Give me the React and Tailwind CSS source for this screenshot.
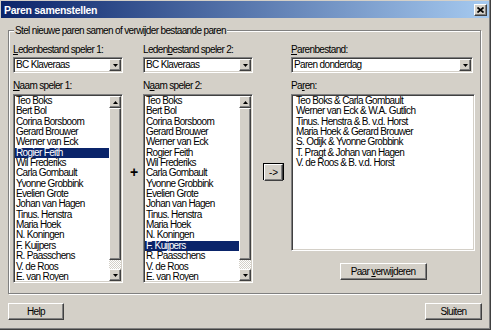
import React from 'react'

const raised =
  'bg-[#d4d0c8] border border-t-white border-l-white border-r-[#404040] border-b-[#404040] shadow-[inset_-1px_-1px_0_#808080]'
const sunken =
  'bg-white border border-t-[#808080] border-l-[#808080] border-r-white border-b-white shadow-[inset_1px_1px_0_#404040,inset_-1px_-1px_0_#d4d0c8] p-[1px]'
const font = "font-['Liberation_Sans',Arial,sans-serif] text-[10px] tracking-[-0.65px] text-black"

const spelers = [
  'Teo Boks',
  'Bert Bol',
  'Corina Borsboom',
  'Gerard Brouwer',
  'Werner van Eck',
  'Rogier Feith',
  'Wil Frederiks',
  'Carla Gombault',
  'Yvonne Grobbink',
  'Evelien Grote',
  'Johan van Hagen',
  'Tinus. Henstra',
  'Maria Hoek',
  'N. Koningen',
  'F. Kuijpers',
  'R. Paasschens',
  'V. de Roos',
  'E. van Royen',
]

const paren = [
  'Teo Boks & Carla Gombault',
  'Werner van Eck & W.A. Gutlich',
  'Tinus. Henstra & B. v.d. Horst',
  'Maria Hoek & Gerard Brouwer',
  'S. Odijk & Yvonne Grobbink',
  'T. Pragt & Johan van Hagen',
  'V. de Roos & B. v.d. Horst',
]

/* label with underlined access key */
function Label({ text, at }) {
  return (
    <div className="h-[11px] leading-[11px] whitespace-nowrap">
      {text.slice(0, at)}
      <span className="underline underline-offset-[1px]">{text[at]}</span>
      {text.slice(at + 1)}
    </div>
  )
}

function Arrow({ up }) {
  return (
    <svg width="5" height="3" viewBox="0 0 5 3">
      <path d={up ? 'M0 3h5L2.5 0z' : 'M0 0h5L2.5 3z'} fill="#000" />
    </svg>
  )
}

function ComboBox({ value, width }) {
  return (
    <div className={`${sunken} flex h-[16px] mt-[2px]`} style={{ width }}>
      <div className="flex-1 pl-[1px] leading-[12px] whitespace-nowrap">{value}</div>
      <div className={`${raised} w-[12px] h-[12px] flex items-center justify-center`}>
        <Arrow />
      </div>
    </div>
  )
}

function ListBox({ items, selected, width, height, scroll, pad = 'pl-[1px]' }) {
  return (
    <div className={`${sunken} flex mt-[3px]`} style={{ width, height }}>
      <div className="flex-1 overflow-hidden">
        {items.map((item, i) => (
          <div
            key={item}
            className={`h-[10.35px] leading-[10.35px] whitespace-nowrap ${pad} ${
              i === selected ? 'bg-[#0a246a] text-white' : ''
            }`}
          >
            {item}
          </div>
        ))}
      </div>
      {scroll && (
        <div className="w-[12px] flex flex-col">
          <div className={`${raised} h-[12px] flex items-center justify-center`}>
            <Arrow up />
          </div>
          <div className={`${raised} flex-1`} />
          <div className="h-[9px] bg-[repeating-conic-gradient(#d4d0c8_0_25%,#ffffff_0_50%)] bg-[length:2px_2px]" />
          <div className={`${raised} h-[12px] flex items-center justify-center`}>
            <Arrow />
          </div>
        </div>
      )}
    </div>
  )
}

function Button({ children, className = '' }) {
  return (
    <div className={`${raised} h-[17px] flex items-center justify-center leading-[11px] ${className}`}>
      {children}
    </div>
  )
}

export default function App() {
  return (
    <div
      className={`${font} w-[491px] h-[330px] bg-[#d4d0c8] flex flex-col shadow-[inset_-1px_-1px_0_#404040,inset_-2px_-2px_0_#808080]`}
    >
      {/* title bar */}
      <div className="mt-[1px] ml-[1px] w-[488px] h-[17px] bg-[linear-gradient(to_right,#0a246a,#a6caf0)] flex items-center pl-[3px] pr-[2px]">
        <div className="flex-1 text-white font-bold text-[10.5px] tracking-[-0.3px] leading-[12px]">
          Paren samenstellen
        </div>
        <div className={`${raised} w-[13px] h-[12px] flex items-center justify-center`}>
          <svg width="7" height="6" viewBox="0 0 7 6">
            <path d="M0.5 0.5L6.5 5.5M6.5 0.5L0.5 5.5" stroke="#000" strokeWidth="1.7" />
          </svg>
        </div>
      </div>

      {/* group box */}
      <div className="relative ml-[8px] mt-[12px] w-[473px] h-[264px] border border-[#808080] shadow-[inset_1px_1px_0_#fff,1px_1px_0_#fff] pt-[13px] pl-[4px] flex items-start">
        <div className="absolute left-[5px] top-[-6px] px-[1px] bg-[#d4d0c8] leading-[11px] whitespace-nowrap">
          Stel nieuwe paren samen of verwijder bestaande paren
        </div>

        <div className="w-[110px]">
          <Label text="Ledenbestand speler 1:" at={0} />
          <ComboBox value="BC Klaveraas" width={110} />
          <div className="mt-[7px]">
            <Label text="Naam speler 1:" at={0} />
          </div>
          <ListBox items={spelers} selected={5} width={110} height={189} scroll />
        </div>

        <div className="w-[20px] pt-[122px] pl-[7px] font-bold text-[14px] leading-[12px]">+</div>

        <div className="w-[110px]">
          <Label text="Ledenbestand speler 2:" at={5} />
          <ComboBox value="BC Klaveraas" width={110} />
          <div className="mt-[7px]">
            <Label text="Naam speler 2:" at={1} />
          </div>
          <ListBox items={spelers} selected={14} width={110} height={189} scroll />
        </div>

        <div className="w-[38px] pt-[119px] pl-[10px]">
          <div className="w-[21px] h-[17px] border border-black">
            <Button className="h-[15px] text-[10px] tracking-[-0.2px]">-&gt;</Button>
          </div>
        </div>

        <div className="w-[184px] flex flex-col">
          <Label text="Parenbestand:" at={0} />
          <ComboBox value="Paren donderdag" width={182} />
          <div className="mt-[7px]">
            <Label text="Paren:" at={2} />
          </div>
          <ListBox items={paren} width={184} height={157} pad="pl-[3px]" />
          <Button className="w-[87px] mt-[12px] self-center">
            <span>
              Paar <span className="underline underline-offset-[1px]">v</span>erwijderen
            </span>
          </Button>
        </div>
      </div>

      {/* bottom buttons */}
      <div className="ml-[8px] mt-[9px] w-[474px] flex justify-between">
        <Button className="w-[56px]">Help</Button>
        <Button className="w-[57px]">Sluiten</Button>
      </div>
    </div>
  )
}
